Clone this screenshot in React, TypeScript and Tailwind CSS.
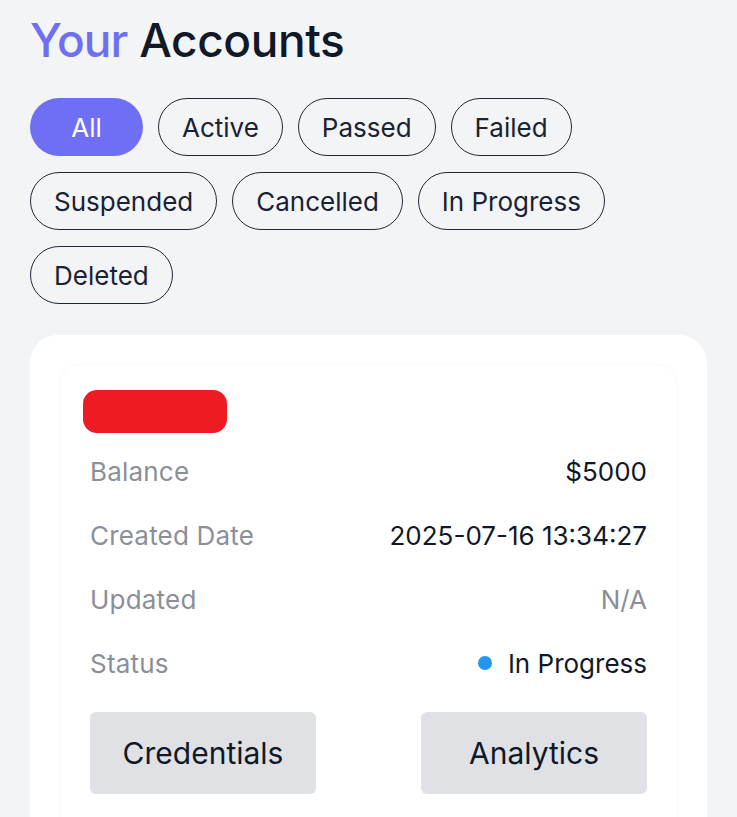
import React from "react";

const filters = [
  ["All", true],
  ["Active", false],
  ["Passed", false],
  ["Failed", false],
  ["Suspended", false],
  ["Cancelled", false],
  ["In Progress", false],
  ["Deleted", false],
] as const;

function Row({ label, children }: { label: string; children: React.ReactNode }) {
  return (
    <div className="flex h-[64px] items-center justify-between">
      <span className="text-[26px] tracking-[0.2px] text-[#8a8f98]">{label}</span>
      <span className="text-[26px] text-[#111827]">{children}</span>
    </div>
  );
}

export default function App() {
  return (
    <div
      className="h-[817px] w-full overflow-hidden bg-[#f3f4f6] pl-[30px] pt-[12px]"
      style={{ fontFamily: "Inter, 'Noto Sans', sans-serif" }}
    >
      <h1 className="text-[46px] font-medium leading-[56px] tracking-[-0.4px] text-[#111827]">
        <span className="tracking-[-1px] text-[#6f6ff2]">Your</span> Accounts
      </h1>

      <div className="mt-[30px] flex max-w-[680px] flex-wrap gap-x-[15px] gap-y-[16px]">
        {filters.map(([name, active]) =>
          active ? (
            <button
              key={name}
              className="flex h-[58px] w-[113px] items-center justify-center rounded-full bg-[#6f6ff5] text-[26px] text-white"
            >
              {name}
            </button>
          ) : (
            <button
              key={name}
              className="flex h-[58px] items-center justify-center rounded-full border-[1.5px] border-[#1f2937] px-[23px] text-[26px] text-[#1a2233]"
            >
              {name}
            </button>
          )
        )}
      </div>

      <div className="mt-[31px] w-[677px] rounded-t-[28px] bg-white px-[30px] pt-[30px] pb-[60px]">
        <div className="rounded-t-[20px] px-[30px] pt-[25px] pb-[40px] shadow-[0_0_3px_rgba(0,0,0,0.05)]">
          <div className="-ml-[7px] h-[43px] w-[144px] rounded-[14px] bg-[#ed1c24]" />
          <div className="mt-[6px]">
            <Row label="Balance">$5000</Row>
            <Row label="Created Date">2025-07-16 13:34:27</Row>
            <Row label="Updated">
              <span className="text-[#8a8f98]">N/A</span>
            </Row>
            <Row label="Status">
              <span className="flex items-center gap-[16px]">
                <span className="inline-block h-[14px] w-[14px] rounded-full bg-[#2196f3]" />
                In Progress
              </span>
            </Row>
          </div>
          <div className="mt-[17px] flex justify-between">
            <button className="h-[82px] w-[226px] rounded-[6px] bg-[#dfe1e5] text-[30px] text-[#111827]">
              Credentials
            </button>
            <button className="h-[82px] w-[226px] rounded-[6px] bg-[#dfe1e5] text-[30px] text-[#111827]">
              Analytics
            </button>
          </div>
        </div>
      </div>
    </div>
  );
}
